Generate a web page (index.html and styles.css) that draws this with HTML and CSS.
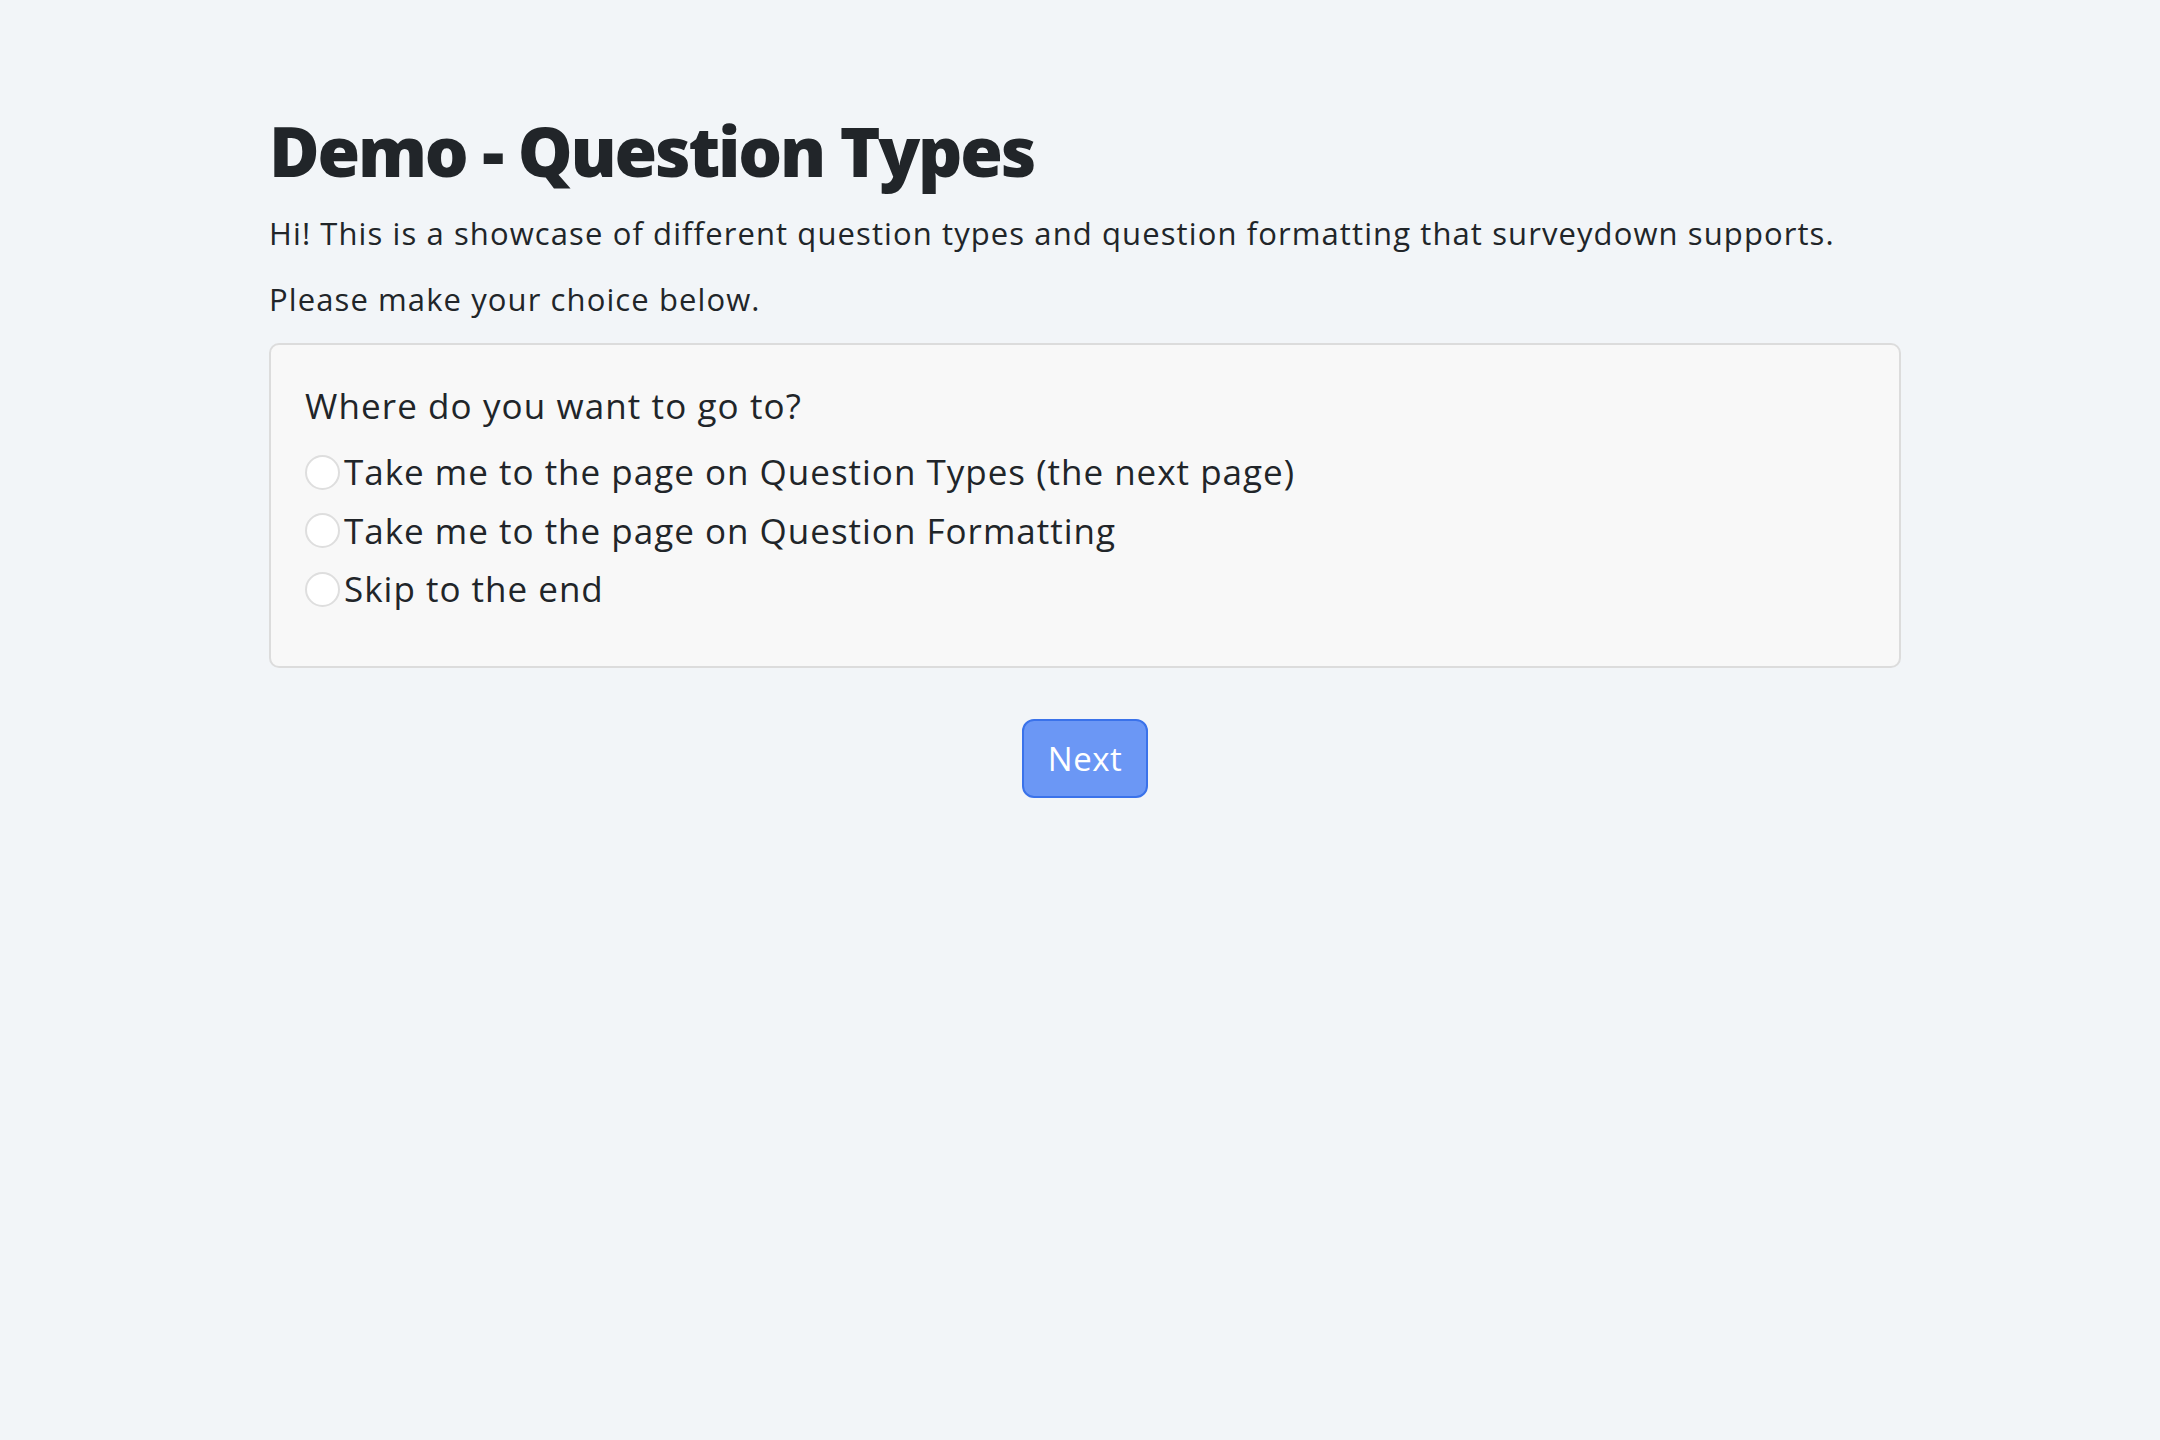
FILE: index.html
```html
<!DOCTYPE html>
<html lang="en">
<head>
<meta charset="utf-8">
<title>Demo - Question Types</title>
<link rel="stylesheet" href="styles.css">
</head>
<body>
<main class="page">
  <h1 class="title">Demo - Question Types</h1>
  <p class="lead">Hi! This is a showcase of different question types and question formatting that surveydown supports.</p>
  <p class="lead">Please make your choice below.</p>
  <section class="card">
    <div class="question">Where do you want to go to?</div>
    <label class="option"><span class="radio"></span><span>Take me to the page on Question Types (the next page)</span></label>
    <label class="option"><span class="radio"></span><span>Take me to the page on Question Formatting</span></label>
    <label class="option"><span class="radio"></span><span>Skip to the end</span></label>
  </section>
  <div class="actions"><button class="next">Next</button></div>
</main>
</body>
</html>
```
FILE: styles.css
```css
html, body {
  margin: 0;
  padding: 0;
  background: #f2f5f8;
}
body {
  font-family: "Open Sans", Lato, sans-serif;
  color: #212529;
}
.page {
  width: 1632px;
  margin-left: 269px;
  padding-top: 110px;
}
.title {
  margin: 0 0 21px;
  font-size: 69px;
  line-height: 80px;
  font-weight: 800;
  letter-spacing: -2.2px;
}
.lead {
  margin: 0 0 21px;
  font-size: 31px;
  line-height: 45px;
  font-weight: 400;
  letter-spacing: 1.1px;
}
.card {
  background: #f8f8f8;
  border: 2px solid #dcdcdc;
  border-radius: 10px;
  padding: 36px 34px 47px;
}
.question {
  font-size: 35px;
  line-height: 50px;
  margin-bottom: 12px;
  letter-spacing: 1.1px;
}
.option {
  display: flex;
  align-items: center;
  gap: 4px;
  font-size: 35px;
  line-height: 58.5px;
  letter-spacing: 1px;
}
.radio {
  width: 35px;
  height: 35px;
  box-sizing: border-box;
  border: 2px solid #dedede;
  border-radius: 50%;
  background: #fff;
  flex: none;
}
.actions {
  display: flex;
  justify-content: center;
  margin-top: 51px;
}
.next {
  width: 126px;
  height: 79px;
  box-sizing: border-box;
  background: #6b97f5;
  border: 2px solid #3a72ea;
  border-radius: 12px;
  color: #fff;
  font-family: "Open Sans", Lato, sans-serif;
  font-size: 33px;
  letter-spacing: 0.5px;
  padding: 0;
}
```
